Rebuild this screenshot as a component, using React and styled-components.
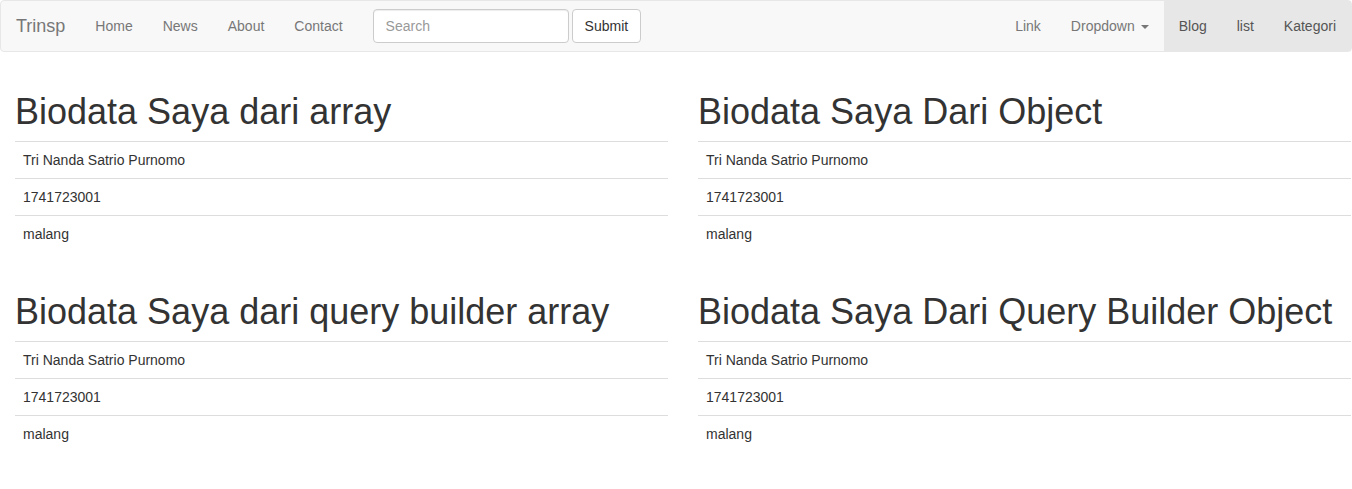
import React from "react";
import styled, { createGlobalStyle } from "styled-components";

const Global = createGlobalStyle`
  html, body { margin: 0; padding: 0; }
  body {
    font-family: "Liberation Sans", Arial, Helvetica, sans-serif;
    font-size: 14px;
    line-height: 1.42857143;
    color: #333;
    background: #fff;
    overflow-x: hidden;
  }
  * { box-sizing: border-box; }
`;

const Navbar = styled.nav`
  display: flex;
  align-items: stretch;
  height: 52px;
  margin-bottom: 20px;
  background: #f8f8f8;
  border: 1px solid #e7e7e7;
  border-radius: 4px;
`;

const Brand = styled.a`
  display: block;
  height: 50px;
  padding: 15px;
  font-size: 18px;
  line-height: 20px;
  color: #777;
  text-decoration: none;
`;

const NavList = styled.ul`
  display: flex;
  list-style: none;
  margin: 0;
  padding: 0;
  margin-left: ${(p) => (p.$right ? "auto" : "0")};
`;

const NavItem = styled.li`
  display: block;
  background: ${(p) => (p.$active ? "#e7e7e7" : "transparent")};
`;

const NavLink = styled.a`
  display: block;
  padding: 15px;
  line-height: 20px;
  font-size: 14px;
  color: ${(p) => (p.$active ? "#555" : "#777")};
  text-decoration: none;
`;

const Caret = styled.span`
  display: inline-block;
  width: 0;
  height: 0;
  margin-left: 6px;
  vertical-align: middle;
  border-top: 4px solid #777;
  border-right: 4px solid transparent;
  border-left: 4px solid transparent;
`;

const Form = styled.form`
  display: flex;
  align-items: flex-start;
  gap: 3px;
  padding: 0 15px;
  margin-top: 8px;
`;

const Input = styled.input`
  width: 196px;
  height: 34px;
  padding: 6px 12px;
  font-family: inherit;
  font-size: 14px;
  line-height: 1.42857143;
  color: #555;
  background: #fff;
  border: 1px solid #ccc;
  border-radius: 4px;
  box-shadow: inset 0 1px 1px rgba(0, 0, 0, 0.075);
  outline: none;
  &::placeholder { color: #999; }
`;

const Button = styled.button`
  height: 34px;
  padding: 6px 12px;
  font-family: inherit;
  font-size: 14px;
  line-height: 1.42857143;
  color: #333;
  background: #fff;
  border: 1px solid #ccc;
  border-radius: 4px;
  cursor: pointer;
`;

const Grid = styled.div`
  display: grid;
  grid-template-columns: 683px 683px;
  width: 1366px;
`;

const Col = styled.section`
  padding: 0 15px;
`;

const Title = styled.h1`
  margin: 20px 0 10px;
  font-size: 36px;
  font-weight: 500;
  line-height: 39px;
  color: #333;
`;

const Table = styled.table`
  width: 100%;
  border-collapse: collapse;
  border-spacing: 0;
  margin-bottom: 20px;
`;

const Cell = styled.td`
  padding: 8px;
  line-height: 20px;
  border-top: 1px solid #ddd;
  vertical-align: top;
`;

const rows = ["Tri Nanda Satrio Purnomo", "1741723001", "malang"];

const Block = ({ title }) => (
  <Col>
    <Title>{title}</Title>
    <Table>
      <tbody>
        {rows.map((r) => (
          <tr key={r}>
            <Cell>{r}</Cell>
          </tr>
        ))}
      </tbody>
    </Table>
  </Col>
);

export default function App() {
  return (
    <>
      <Global />
      <Navbar>
        <Brand href="#">Trinsp</Brand>
        <NavList>
          {["Home", "News", "About", "Contact"].map((t) => (
            <NavItem key={t}>
              <NavLink href="#">{t}</NavLink>
            </NavItem>
          ))}
        </NavList>
        <Form onSubmit={(e) => e.preventDefault()}>
          <Input placeholder="Search" />
          <Button type="submit">Submit</Button>
        </Form>
        <NavList $right>
          <NavItem>
            <NavLink href="#">Link</NavLink>
          </NavItem>
          <NavItem>
            <NavLink href="#">
              Dropdown<Caret />
            </NavLink>
          </NavItem>
          {["Blog", "list", "Kategori"].map((t) => (
            <NavItem key={t} $active>
              <NavLink href="#" $active>
                {t}
              </NavLink>
            </NavItem>
          ))}
        </NavList>
      </Navbar>
      <Grid>
        <Block title="Biodata Saya dari array" />
        <Block title="Biodata Saya Dari Object" />
        <Block title="Biodata Saya dari query builder array" />
        <Block title="Biodata Saya Dari Query Builder Object" />
      </Grid>
    </>
  );
}
